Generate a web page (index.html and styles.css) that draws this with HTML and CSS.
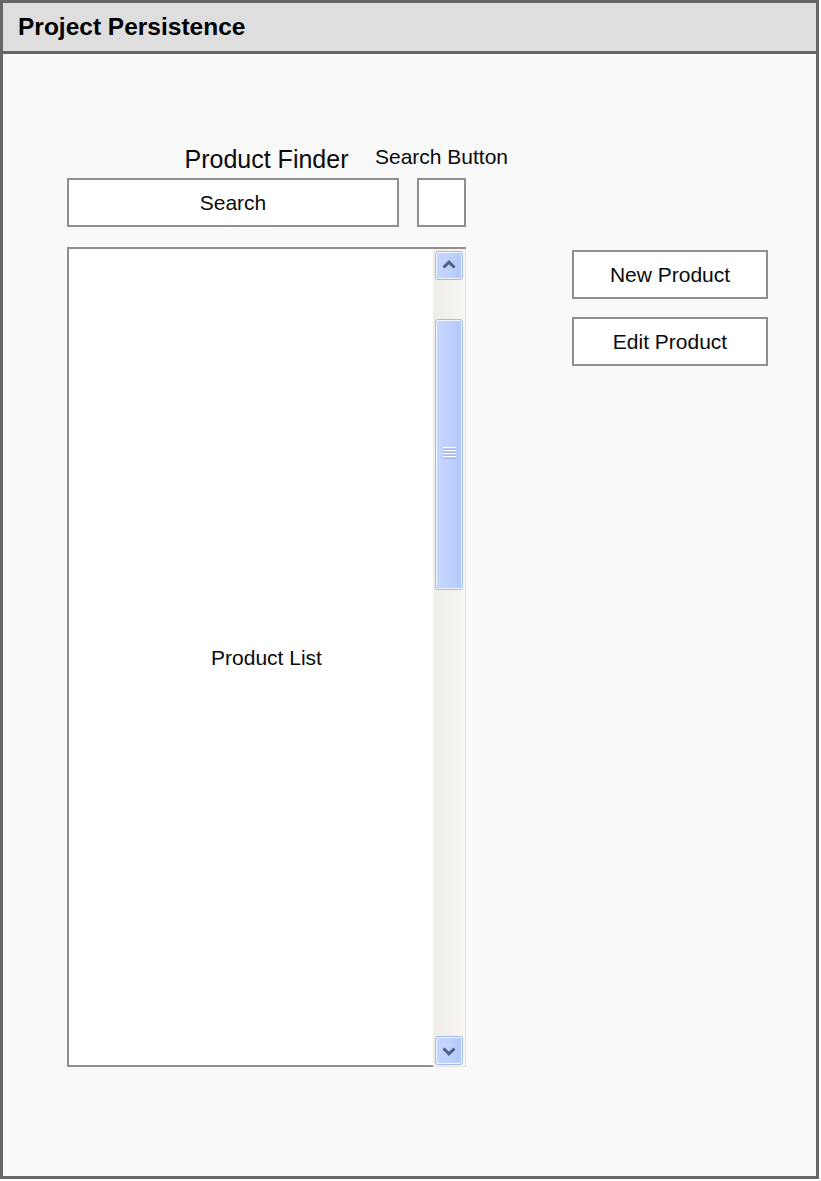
FILE: index.html
```html
<!DOCTYPE html>
<html lang="en">
<head>
<meta charset="utf-8">
<title>Project Persistence</title>
<link rel="stylesheet" href="styles.css">
</head>
<body>
<div class="frame">
  <header class="titlebar"><h1 class="title">Project Persistence</h1></header>
  <main class="main">
    <section class="finder">
      <div class="finder-grid">
        <div class="finder-title">Product Finder</div>
        <div class="btn-label">Search Button</div>
        <div class="search-box">Search</div>
        <div class="search-btn"></div>
      </div>
      <div class="list">
        <div class="list-pane"></div>
        <div class="list-label">Product List</div>
        <div class="scrollbar">
          <div class="sb-btn">
            <svg class="chev" width="14" height="9" viewBox="0 0 14 9"><polyline points="1.5,7.5 7,2.2 12.5,7.5" fill="none" stroke="#4d6185" stroke-width="3"/></svg>
          </div>
          <div class="sb-thumb">
            <svg width="13" height="12" viewBox="0 0 13 12">
              <rect x="0" y="0" width="13" height="1.5" fill="#ffffff"/>
              <rect x="0" y="1.5" width="13" height="1" fill="#8fa8e4"/>
              <rect x="0" y="3" width="13" height="1.5" fill="#ffffff"/>
              <rect x="0" y="4.5" width="13" height="1" fill="#8fa8e4"/>
              <rect x="0" y="6" width="13" height="1.5" fill="#ffffff"/>
              <rect x="0" y="7.5" width="13" height="1" fill="#8fa8e4"/>
              <rect x="0" y="9" width="13" height="1.5" fill="#ffffff"/>
              <rect x="0" y="10.5" width="13" height="1" fill="#8fa8e4"/>
            </svg>
          </div>
          <div class="sb-btn sb-down">
            <svg class="chev" width="14" height="9" viewBox="0 0 14 9"><polyline points="1.5,1.5 7,6.8 12.5,1.5" fill="none" stroke="#4d6185" stroke-width="3"/></svg>
          </div>
        </div>
      </div>
    </section>
    <aside class="actions">
      <div class="action">New Product</div>
      <div class="action">Edit Product</div>
    </aside>
  </main>
</div>
</body>
</html>
```
FILE: styles.css
```css
html, body {
  margin: 0;
  padding: 0;
  background: #ffffff;
}

body {
  font-family: "Liberation Sans", Arial, sans-serif;
  color: #0a0a0a;
}

.frame {
  box-sizing: border-box;
  width: 819px;
  height: 1179px;
  border: 3px solid #666666;
  background: #f9f9f9;
}

.titlebar {
  box-sizing: border-box;
  height: 51px;
  background: #dedede;
  border-bottom: 3px solid #666666;
  display: flex;
  align-items: center;
  padding-left: 15px;
}

.title {
  margin: 0;
  font-size: 24.5px;
  font-weight: bold;
  color: #000000;
  line-height: 28px;
}

.main {
  display: flex;
  align-items: flex-start;
  padding: 90px 0 0 64px;
}

.finder {
  width: 399px;
}

.finder-grid {
  display: grid;
  grid-template-columns: 332px 49px;
  grid-template-rows: 30px 49px;
  column-gap: 18px;
  row-gap: 4px;
}

.finder-title {
  grid-area: 1 / 1 / 2 / 3;
  text-align: center;
  font-size: 25px;
  line-height: 30px;
}

.btn-label {
  grid-area: 1 / 2 / 2 / 3;
  justify-self: center;
  align-self: start;
  white-space: nowrap;
  font-size: 21px;
  line-height: 26px;
}

.search-box,
.search-btn,
.action {
  box-sizing: border-box;
  background: #ffffff;
  border: 2px solid #8f8f8f;
}

.search-box {
  grid-area: 2 / 1;
  display: flex;
  align-items: center;
  justify-content: center;
  font-size: 21px;
}

.search-btn {
  grid-area: 2 / 2;
}

.list {
  margin-top: 20px;
  box-sizing: border-box;
  height: 820px;
  display: grid;
  grid-template-columns: 1fr 33px;
  border-top: 2px solid #8f8f8f;
}

.list-pane {
  grid-area: 1 / 1;
  background: #ffffff;
  border-left: 2px solid #8f8f8f;
  border-bottom: 2px solid #8f8f8f;
}

.list-label {
  grid-area: 1 / 1 / 2 / 3;
  place-self: center;
  font-size: 21px;
}

.scrollbar {
  grid-area: 1 / 2;
  box-sizing: border-box;
  display: flex;
  flex-direction: column;
  padding: 2px 3px 1px 2px;
  background: linear-gradient(to right, #eeede7 0%, #f3f2ee 60%, #f8f7f4 100%);
  border-right: 1px solid #e2e0da;
  border-bottom: 1px solid #e6e4de;
}

.sb-btn,
.sb-thumb {
  box-sizing: border-box;
  width: 28px;
  border: 1px solid #a3baee;
  border-radius: 3px;
  box-shadow: inset 0 0 0 1px #f2f6ff;
  background: linear-gradient(to right, #c6d7fd 0%, #bdd0fc 60%, #b1c7f9 100%);
  display: flex;
  align-items: center;
  justify-content: center;
}

.sb-btn {
  height: 29px;
}

.chev {
  display: block;
  flex: none;
}

.sb-btn .chev {
  margin-top: -3px;
}

.sb-down .chev {
  margin-top: 1px;
}

.sb-thumb {
  margin-top: 39px;
  height: 271px;
}

.sb-thumb svg {
  display: block;
  margin-top: -4px;
}

.sb-down {
  margin-top: auto;
}

.actions {
  margin: 106px 0 0 106px;
  width: 196px;
  display: flex;
  flex-direction: column;
  gap: 18px;
}

.action {
  height: 49px;
  display: flex;
  align-items: center;
  justify-content: center;
  font-size: 21px;
}
```
